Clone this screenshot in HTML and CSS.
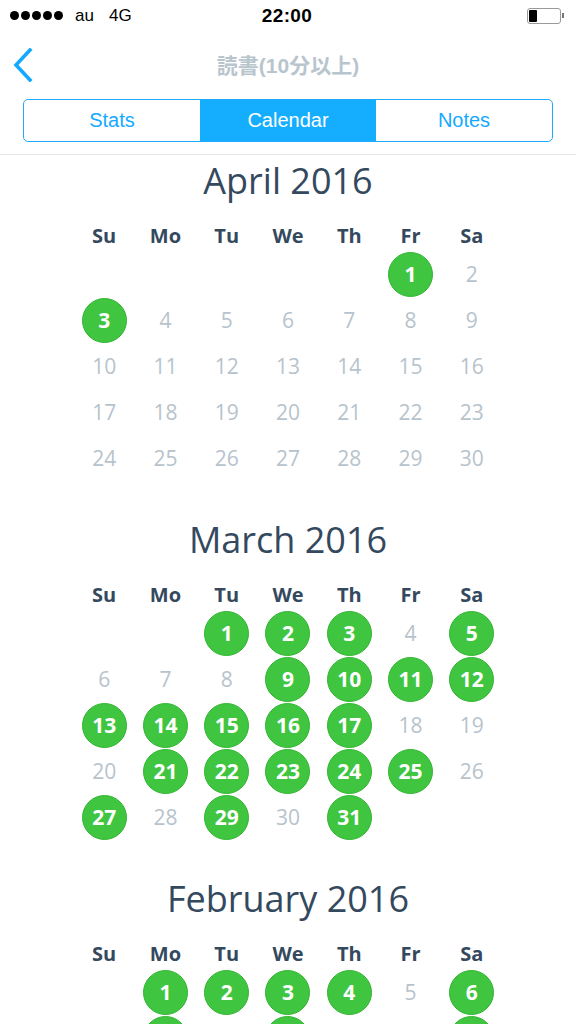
FILE: index.html
```html
<!doctype html>
<html lang="ja">
<head>
  <meta charset="utf-8">
  <title>読書(10分以上)</title>
  <meta name="viewport" content="width=device-width, initial-scale=1">
  <link rel="stylesheet" href="styles.css">
</head>
<body>

  <!-- status bar -->
  <div class="status">
    <div class="status-left">
      <span class="signal"><i></i><i></i><i></i><i></i><i></i></span>
      <span class="carrier">au</span>
      <span class="net">4G</span>
    </div>
    <div class="time">22:00</div>
    <div class="status-right">
      <span class="battery"><span class="battery-level"></span></span><span class="battery-nub"></span>
    </div>
  </div>

  <!-- top bar -->
  <div class="nav">
    <a class="back" href="#">
      <svg width="22" height="34" viewBox="0 0 22 34"><path d="M18 2 L4 17 L18 32" fill="none" stroke="#14a9ff" stroke-width="3.6" stroke-linecap="square"/></svg>
    </a>
    <div class="nav-title">読書(10分以上)</div>
  </div>

  <div class="tabs-wrap">
    <div class="tabs">
      <div class="tab">Stats</div>
      <div class="tab active">Calendar</div>
      <div class="tab">Notes</div>
    </div>
  </div>

  <div class="months">

    <!-- April -->
    <div class="month">
      <div class="month-title">April 2016</div>
      <div class="week">
        <span>Su</span><span>Mo</span><span>Tu</span><span>We</span><span>Th</span><span>Fr</span><span>Sa</span>
      </div>
      <div class="days">
        <span></span><span></span><span></span><span></span><span></span>
        <span class="done">1</span><span>2</span>
        <span class="done">3</span><span>4</span><span>5</span><span>6</span><span>7</span><span>8</span><span>9</span>
        <span>10</span><span>11</span><span>12</span><span>13</span><span>14</span><span>15</span><span>16</span>
        <span>17</span><span>18</span><span>19</span><span>20</span><span>21</span><span>22</span><span>23</span>
        <span>24</span><span>25</span><span>26</span><span>27</span><span>28</span><span>29</span><span>30</span>
      </div>
    </div>

    <!-- March -->
    <div class="month">
      <div class="month-title">March 2016</div>
      <div class="week">
        <span>Su</span><span>Mo</span><span>Tu</span><span>We</span><span>Th</span><span>Fr</span><span>Sa</span>
      </div>
      <div class="days">
        <span></span><span></span>
        <span class="done">1</span><span class="done">2</span><span class="done">3</span><span>4</span><span class="done">5</span>
        <span>6</span><span>7</span><span>8</span><span class="done">9</span><span class="done">10</span><span class="done">11</span><span class="done">12</span>
        <span class="done">13</span><span class="done">14</span><span class="done">15</span><span class="done">16</span><span class="done">17</span><span>18</span><span>19</span>
        <span>20</span><span class="done">21</span><span class="done">22</span><span class="done">23</span><span class="done">24</span><span class="done">25</span><span>26</span>
        <span class="done">27</span><span>28</span><span class="done">29</span><span>30</span><span class="done">31</span>
      </div>
    </div>

    <!-- February -->
    <div class="month">
      <div class="month-title">February 2016</div>
      <div class="week">
        <span>Su</span><span>Mo</span><span>Tu</span><span>We</span><span>Th</span><span>Fr</span><span>Sa</span>
      </div>
      <div class="days">
        <span></span>
        <span class="done">1</span><span class="done">2</span><span class="done">3</span><span class="done">4</span><span>5</span><span class="done">6</span>
        <span>7</span><span class="done">8</span><span>9</span><span class="done">10</span><span>11</span><span>12</span><span class="done">13</span>
      </div>
    </div>

  </div>

</body>
</html>
```

FILE: styles.css
```css
html, body {
  margin: 0;
  padding: 0;
  background-color: white;
  overflow: hidden;
}
body {
  font-family: "Liberation Sans", Arial, sans-serif;
  color: #000;
}

/* status bar */
.status {
  height: 31px;
  display: flex;
  align-items: center;
  justify-content: space-between;
  padding: 0 12px 0 10px;
  font-size: 17px;
}
.status-left {
  flex: 1;
  display: flex;
  align-items: center;
}
.status-right {
  flex: 1;
  display: flex;
  align-items: center;
  justify-content: flex-end;
}
.signal {
  display: flex;
  gap: 2px;
  margin-right: 12px;
}
.signal i {
  width: 9px;
  height: 9px;
  border-radius: 50%;
  background-color: #000;
}
.carrier {
  margin-right: 15px;
}
.time {
  font-weight: 700;
  font-size: 19px;
  letter-spacing: 0.4px;
}
.battery {
  width: 30px;
  height: 12px;
  border: 1px solid #9a9a9a;
  border-radius: 3px;
  padding: 1px;
  box-sizing: content-box;
  display: flex;
}
.battery-level {
  width: 8px;
  height: 12px;
  background-color: #000;
  border-radius: 1px;
}
.battery-nub {
  width: 2px;
  height: 5px;
  background-color: #777;
  margin-left: 1px;
}

/* nav */
.nav {
  height: 68px;
  display: flex;
  align-items: center;
  justify-content: center;
  position: relative;
}
.back {
  position: absolute;
  left: 12px;
  top: 17px;
}
.back svg {
  display: block;
}
.nav-title {
  font-family: "Liberation Sans", "Noto Sans CJK JP", sans-serif;
  font-weight: 700;
  font-size: 21px;
  color: #b9c5cd;
  margin-top: -3px;
}

/* segmented control */
.tabs-wrap {
  padding: 0 23px 12px 23px;
  border-bottom: 1px solid #e4e6e8;
}
.tabs {
  display: flex;
  height: 41px;
  border: 1.5px solid #1eaaff;
  border-radius: 5px;
  overflow: hidden;
}
.tab {
  flex: 1;
  display: flex;
  align-items: center;
  justify-content: center;
  font-size: 20px;
  color: #14aaff;
}
.tab.active {
  background-color: #15aeff;
  color: #fff;
}

/* calendar */
.months {
  padding-top: 2px;
  font-family: "Open Sans", sans-serif;
}
.month {
  width: 429px;
  margin: 0 auto 35px auto;
}
.month-title {
  height: 48px;
  line-height: 48px;
  text-align: center;
  font-size: 36px;
  color: #34495e;
}
.week {
  margin-top: 19px;
  display: grid;
  grid-template-columns: repeat(7, 1fr);
  line-height: 24px;
  font-size: 20px;
  font-weight: 700;
  color: #34495e;
  text-align: center;
}
.days {
  margin-top: 3px;
  display: grid;
  grid-template-columns: repeat(7, 1fr);
  grid-auto-rows: 46px;
  font-size: 21px;
  color: #b7c3cc;
}
.days span {
  display: flex;
  align-items: center;
  justify-content: center;
}
.days .done {
  width: 45px;
  height: 45px;
  margin: 0 auto;
  box-sizing: border-box;
  border-radius: 50%;
  background-color: #40c540;
  border: 1px solid #2fb62f;
  color: #fff;
  font-weight: 700;
  align-self: center;
}
```
